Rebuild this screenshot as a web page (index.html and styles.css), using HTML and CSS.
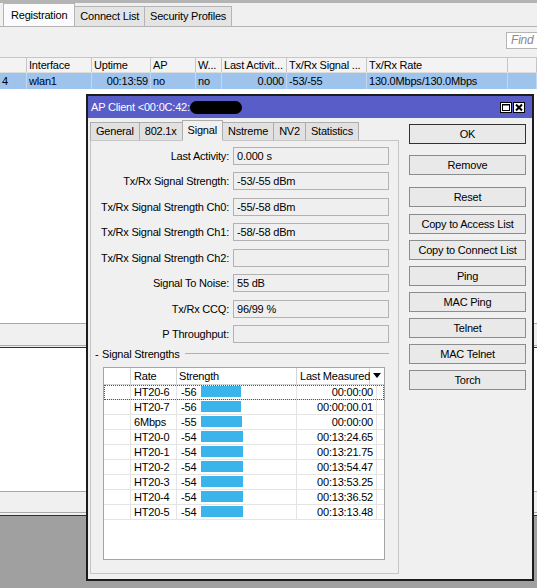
FILE: index.html
```html
<!DOCTYPE html>
<html>
<head>
<meta charset="utf-8">
<title>AP Client</title>
<link rel="stylesheet" href="styles.css">
</head>
<body>
<div class="mainwin">
  <div class="topline"></div>
  <div class="mtabs">
    <div class="mtab sel">Registration</div>
    <div class="mtab">Connect List</div>
    <div class="mtab">Security Profiles</div>
  </div>
  <div class="toolbar"><div class="find">Find</div></div>
  <div class="mgrid ghead">
    <div class="c"></div>
    <div class="c">Interface</div>
    <div class="c">Uptime</div>
    <div class="c">AP</div>
    <div class="c">W...</div>
    <div class="c">Last Activit...</div>
    <div class="c">Tx/Rx Signal ...</div>
    <div class="c">Tx/Rx Rate</div>
    <div class="c"></div>
  </div>
  <div class="mgrid grow">
    <div class="c">4</div>
    <div class="c">wlan1</div>
    <div class="c r">00:13:59</div>
    <div class="c">no</div>
    <div class="c">no</div>
    <div class="c r">0.000</div>
    <div class="c">-53/-55</div>
    <div class="c">130.0Mbps/130.0Mbps</div>
    <div class="c"></div>
  </div>
  <div class="mwhite"></div>
  <div class="status"></div>
  <div class="wedge"></div>
</div>
<div class="win2">
  <div class="w2white"></div>
  <div class="status s2"></div>
  <div class="wedge e2"></div>
</div>

<div class="dialog">
  <div class="titlebar">
    <div class="title">AP Client &lt;00:0C:42:<span class="redact"></span></div>
    <div class="tbtns">
      <svg class="tb" width="12" height="11" viewBox="0 0 12 11"><rect x="0.5" y="0.5" width="11" height="10" fill="#fff" stroke="#000"/><rect x="2.5" y="2.5" width="7" height="6" fill="none" stroke="#000"/><line x1="2.5" y1="3" x2="9.5" y2="3" stroke="#000" stroke-width="1"/></svg>
      <svg class="tb" width="12" height="11" viewBox="0 0 12 11"><rect x="0.5" y="0.5" width="11" height="10" fill="#fff" stroke="#000"/><path d="M3 2.5L9 8.5M9 2.5L3 8.5" stroke="#000" stroke-width="2"/></svg>
    </div>
  </div>
  <div class="dbody">
    <div class="pane">
      <div class="dtabs">
        <div class="dtab">General</div>
        <div class="dtab">802.1x</div>
        <div class="dtab sel">Signal</div>
        <div class="dtab">Nstreme</div>
        <div class="dtab">NV2</div>
        <div class="dtab">Statistics</div>
      </div>
      <div class="panel">
        <div class="form">
          <div class="lbl">Last Activity:</div><div class="fld">0.000 s</div>
          <div class="lbl">Tx/Rx Signal Strength:</div><div class="fld">-53/-55 dBm</div>
          <div class="lbl">Tx/Rx Signal Strength Ch0:</div><div class="fld">-55/-58 dBm</div>
          <div class="lbl">Tx/Rx Signal Strength Ch1:</div><div class="fld">-58/-58 dBm</div>
          <div class="lbl">Tx/Rx Signal Strength Ch2:</div><div class="fld"></div>
          <div class="lbl">Signal To Noise:</div><div class="fld">55 dB</div>
          <div class="lbl">Tx/Rx CCQ:</div><div class="fld">96/99 %</div>
          <div class="lbl">P Throughput:</div><div class="fld"></div>
        </div>
        <div class="group"><span class="gdash">-</span><span class="gtext">Signal Strengths</span><span class="gline"></span></div>
        <div class="stable">
          <div class="sh">
            <div class="hc"></div>
            <div class="hc">Rate</div>
            <div class="hc">Strength</div>
            <div class="hc">Last Measured</div>
            <div class="hc arrow"><svg width="8" height="5" viewBox="0 0 8 5"><path d="M0 0H8L4 5Z" fill="#000"/></svg></div>
          </div>
          <div class="sr focus"><div class="sc"></div><div class="sc rate">HT20-6</div><div class="sc str"><span class="val">-56</span><span class="bar" style="width:40px"></span></div><div class="sc lm">00:00:00</div><div class="sc"></div></div>
          <div class="sr"><div class="sc"></div><div class="sc rate">HT20-7</div><div class="sc str"><span class="val">-56</span><span class="bar" style="width:40px"></span></div><div class="sc lm">00:00:00.01</div><div class="sc"></div></div>
          <div class="sr"><div class="sc"></div><div class="sc rate">6Mbps</div><div class="sc str"><span class="val">-55</span><span class="bar" style="width:41px"></span></div><div class="sc lm">00:00:00</div><div class="sc"></div></div>
          <div class="sr"><div class="sc"></div><div class="sc rate">HT20-0</div><div class="sc str"><span class="val">-54</span><span class="bar" style="width:42px"></span></div><div class="sc lm">00:13:24.65</div><div class="sc"></div></div>
          <div class="sr"><div class="sc"></div><div class="sc rate">HT20-1</div><div class="sc str"><span class="val">-54</span><span class="bar" style="width:42px"></span></div><div class="sc lm">00:13:21.75</div><div class="sc"></div></div>
          <div class="sr"><div class="sc"></div><div class="sc rate">HT20-2</div><div class="sc str"><span class="val">-54</span><span class="bar" style="width:42px"></span></div><div class="sc lm">00:13:54.47</div><div class="sc"></div></div>
          <div class="sr"><div class="sc"></div><div class="sc rate">HT20-3</div><div class="sc str"><span class="val">-54</span><span class="bar" style="width:42px"></span></div><div class="sc lm">00:13:53.25</div><div class="sc"></div></div>
          <div class="sr"><div class="sc"></div><div class="sc rate">HT20-4</div><div class="sc str"><span class="val">-54</span><span class="bar" style="width:42px"></span></div><div class="sc lm">00:13:36.52</div><div class="sc"></div></div>
          <div class="sr"><div class="sc"></div><div class="sc rate">HT20-5</div><div class="sc str"><span class="val">-54</span><span class="bar" style="width:42px"></span></div><div class="sc lm">00:13:13.48</div><div class="sc"></div></div>
        </div>
      </div>
    </div>
    <div class="btns">
      <div class="btn def">OK</div>
      <div class="btn rm">Remove</div>
      <div class="btn rs">Reset</div>
      <div class="btn">Copy to Access List</div>
      <div class="btn">Copy to Connect List</div>
      <div class="btn">Ping</div>
      <div class="btn">MAC Ping</div>
      <div class="btn">Telnet</div>
      <div class="btn">MAC Telnet</div>
      <div class="btn">Torch</div>
    </div>
  </div>
</div>
</body>
</html>
```
FILE: styles.css
```css
* { box-sizing: border-box; }
html, body { margin: 0; padding: 0; }
body {
  width: 537px;
  height: 588px;
  overflow: hidden;
  position: relative;
  background: #a0a0a0;
  font-family: "Liberation Sans", Arial, sans-serif;
  font-size: 11px;
  letter-spacing: -0.2px;
  color: #000;
}

/* background main window */
.mainwin { height: 348px; background: #fff; display: flex; flex-direction: column; }
.topline { height: 3px; background: #b4b4b4; }
.mtabs {
  height: 24px;
  background: #f0f0f0;
  border-bottom: 1px solid #b4b4b4;
  display: flex;
  align-items: flex-end;
  padding-left: 3px;
}
.mtab {
  height: 20px;
  padding: 0 5px;
  line-height: 18px;
  background: #e4e4e4;
  border: 1px solid #b4b4b4;
  border-bottom: none;
  margin-right: -1px;
  white-space: nowrap;
}
.mtab.sel { height: 23px; background: #fbfbfb; padding: 0 7px; line-height: 22px; }
.toolbar {
  height: 30px;
  background: #f0f0f0;
  display: flex;
  align-items: flex-start;
  padding-top: 5px;
}
.find {
  margin-left: auto;
  width: 31px;
  height: 17px;
  background: #fff;
  border: 1px solid #b5b5b5;
  border-right: none;
  color: #8a8a8a;
  font-style: italic;
  font-size: 12px;
  line-height: 15px;
  padding-left: 4px;
  overflow: hidden;
}
.mgrid {
  display: grid;
  grid-template-columns: 27px 65px 59px 45px 26px 65px 80px 141px 29px;
  height: 16px;
}
.mgrid .c { line-height: 15px; padding-left: 2px; white-space: nowrap; overflow: hidden; }
.mgrid .c.r { text-align: right; padding: 0 2px 0 0; }
.ghead { background: #f3f3f3; border-top: 1px solid #c6c6c6; border-bottom: 1px solid #dedede; }
.ghead .c { border-right: 1px solid #c6c6c6; }
.grow { background: #9ec4ee; }
.grow .c { border-right: 1px solid #c2d7f0; line-height: 16px; }
.mwhite { height: 234px; background: #fff; }
.status {
  height: 23px;
  background: #f0f0f0;
  border-top: 1px solid #a9a9a9;
  border-bottom: 1px solid #a9a9a9;
}
.wedge { height: 2px; background: #f0f0f0; border-bottom: 1px solid #2e2e2e; }

.win2 { height: 168px; background: #fff; display: flex; flex-direction: column; }
.w2white { height: 143px; }
.status.s2 { height: 22px; }
.wedge.e2 { height: 3px; }

/* dialog window */
.dialog {
  position: absolute;
  left: 86px;
  top: 94px;
  width: 448px;
  height: 487px;
  border: 2px solid #1c1c1c;
  background: #f0f0f0;
  display: flex;
  flex-direction: column;
}
.titlebar {
  height: 22px;
  background: #585dc8;
  color: #fff;
  display: flex;
  align-items: center;
  padding: 0 7px 0 3px;
}
.title { flex: 1; white-space: nowrap; line-height: 14px; }
.redact {
  display: inline-block;
  width: 52px;
  height: 13px;
  background: #000;
  border-radius: 7px;
  vertical-align: -3px;
}
.tbtns { display: flex; gap: 1px; }
.tb { display: block; }

.dbody { flex: 1; display: flex; }
.pane {
  margin-left: 2px;
  width: 309px;
  padding: 2px 0 5px;
  display: flex;
  flex-direction: column;
}
.dtabs {
  height: 21px;
  display: flex;
  align-items: flex-end;
  margin-bottom: -1px;
  position: relative;
  z-index: 1;
}
.dtab {
  height: 19px;
  padding: 0 5px;
  line-height: 17px;
  background: #e1e1e1;
  border: 1px solid #adadad;
  border-bottom-color: #c6c6c6;
  margin-right: -1px;
  white-space: nowrap;
}
.dtab.sel {
  height: 21px;
  line-height: 18px;
  background: #f0f0f0;
  border-bottom-color: #f0f0f0;
  position: relative;
  z-index: 2;
}
.panel {
  flex: 1;
  border: 1px solid #c6c6c6;
  padding-top: 6px;
  display: flex;
  flex-direction: column;
}
.form {
  display: grid;
  grid-template-columns: 138px 156px;
  column-gap: 4px;
  row-gap: 7.43px;
}
.lbl { text-align: right; line-height: 18px; white-space: nowrap; }
.fld {
  height: 18px;
  border: 1px solid #b2b2b2;
  background: #efefef;
  padding-left: 3px;
  line-height: 16px;
  white-space: nowrap;
}
.group {
  margin: 4px 9px 0 4px;
  height: 14px;
  display: flex;
  align-items: center;
}
.gdash { width: 7px; }
.gtext { white-space: nowrap; }
.gline { flex: 1; height: 1px; background: #b0b0b0; margin-left: 5px; }

.stable {
  margin: 6px 0 0 12px;
  width: 282px;
  height: 193px;
  border: 1px solid #a5a5a5;
  background: #fff;
}
.sh {
  display: grid;
  grid-template-columns: 27px 46px 120px 73px 14px;
  height: 17px;
  border-bottom: 1px solid #d4d4d4;
}
.hc { border-right: 1px solid #d4d4d4; padding-left: 3px; line-height: 16px; white-space: nowrap; }
.hc:nth-child(3) { padding-left: 2px; }
.hc.arrow { border-right: none; padding: 0; display: flex; align-items: center; justify-content: center; }
.sr {
  display: grid;
  grid-template-columns: 27px 46px 120px 80px 7px;
  height: 15px;
  border-bottom: 1px solid #e4e4e4;
}
.sr.focus { outline: 1px dotted #555; outline-offset: -1px; }
.sc { border-right: 1px solid #e4e4e4; line-height: 14px; white-space: nowrap; }
.sc:last-child { border-right: none; }
.sc.rate { padding-left: 3px; }
.sc.str { display: flex; align-items: center; padding-left: 4px; }
.val { width: 20px; flex: none; }
.bar { height: 11px; background: #3bb4ec; flex: none; }
.sc.lm { text-align: right; padding-right: 3px; }

.btns {
  margin-left: 10px;
  width: 117px;
  padding-top: 6px;
  display: flex;
  flex-direction: column;
  gap: 6px;
}
.btn {
  height: 20px;
  border: 1px solid #8c8c8c;
  background: #e9e9e9;
  text-align: center;
  line-height: 18px;
  white-space: nowrap;
}
.btn.def { border-color: #333; margin-bottom: 5px; }
.btn.rm { margin-bottom: 6px; }
.btn.rs { margin-bottom: 1px; }
```
